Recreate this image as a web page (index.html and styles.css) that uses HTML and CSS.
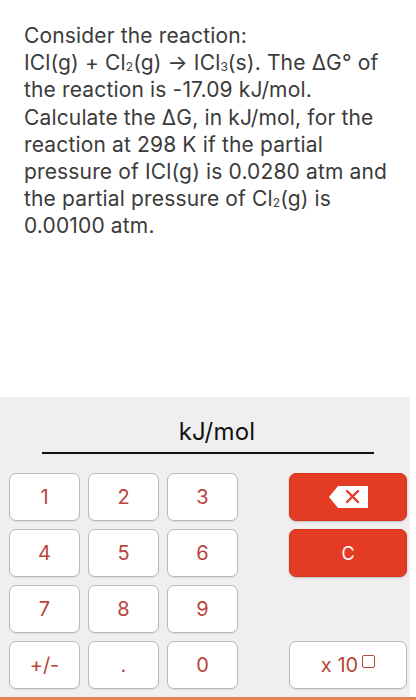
FILE: index.html
```html
<!DOCTYPE html>
<html lang="en">
<head>
  <meta charset="UTF-8">
  <title>Question</title>
  <link rel="stylesheet" href="styles.css">
</head>
<body>
  <div class="question">
    <p>Consider the reaction:<br>
    ICl(g) + Cl<sub>2</sub>(g) &rarr; ICl<sub>3</sub>(s). The &Delta;G&deg; of<br>
    the reaction is -17.09 kJ/mol.<br>
    Calculate the &Delta;G, in kJ/mol, for the<br>
    reaction at 298 K if the partial<br>
    pressure of ICl(g) is 0.0280 atm and<br>
    the partial pressure of Cl<sub>2</sub>(g) is<br>
    0.00100 atm.</p>
  </div>

  <div class="panel">
    <div class="answer">
      <div class="unit">kJ/mol</div>
      <div class="line"></div>
    </div>
    <div class="keypad">
      <button class="key">1</button>
      <button class="key">2</button>
      <button class="key">3</button>
      <span></span>
      <button class="key red">
        <svg width="39" height="22" viewBox="0 0 39 22">
          <path d="M9 0 H39 V22 H9 L0 11 Z" fill="#fff"/>
          <path d="M18 5 L29 16 M29 5 L18 16" stroke="#e33b24" stroke-width="2.4" stroke-linecap="round"/>
        </svg>
      </button>

      <button class="key">4</button>
      <button class="key">5</button>
      <button class="key">6</button>
      <span></span>
      <button class="key red">C</button>

      <button class="key">7</button>
      <button class="key">8</button>
      <button class="key">9</button>
      <span></span>
      <span></span>

      <button class="key">+/-</button>
      <button class="key">.</button>
      <button class="key">0</button>
      <span></span>
      <button class="key">x 10<span class="box"></span></button>
    </div>
  </div>
  <div class="bar"></div>
</body>
</html>
```

FILE: styles.css
```css
body { margin: 0; background: #fff; font-family: Inter, "Noto Sans", sans-serif; }
.question { height: 397px; padding: 0 24px; box-sizing: border-box; }
.question p { margin: 0; padding-top: 22px; font-size: 21px; line-height: 27.2px; color: #3b3b3b; letter-spacing: 0.15px; white-space: nowrap; }
.question sub { font-size: 12px; vertical-align: -1px; line-height: 0; letter-spacing: 0; }
.panel { width: 410px; height: 300px; background: #efefef; }
.answer { padding-top: 20px; height: 76px; box-sizing: border-box; }
.unit { text-align: center; font-size: 24px; color: #111; height: 35px; padding-left: 24px; letter-spacing: 0.2px; }
.line { margin: 0 36px 0 42px; height: 2px; background: #111; }
.keypad { display: grid; grid-template-columns: 71px 71px 71px 35px 118px; grid-auto-rows: 48px; column-gap: 8px; row-gap: 8px; padding: 0 0 0 9px; }
.key { background: #fff; border: 1px solid #b9b9b9; border-radius: 7px; font-family: inherit; font-size: 20px; color: #b9453a; padding: 0; display: flex; align-items: center; justify-content: center; box-shadow: 0 1px 1px rgba(0,0,0,0.08); }
.key.red { background: #e33b24; border-color: #d23620; color: #fff; font-size: 18px; box-shadow: 0 1px 2px rgba(0,0,0,0.2); }
.box { display: inline-block; width: 13px; height: 13px; border: 1.5px solid #b9453a; border-radius: 2px; margin-left: 4px; position: relative; top: -4px; box-sizing: border-box; }
.bar { width: 416px; height: 3px; background: #e9825a; }
```
